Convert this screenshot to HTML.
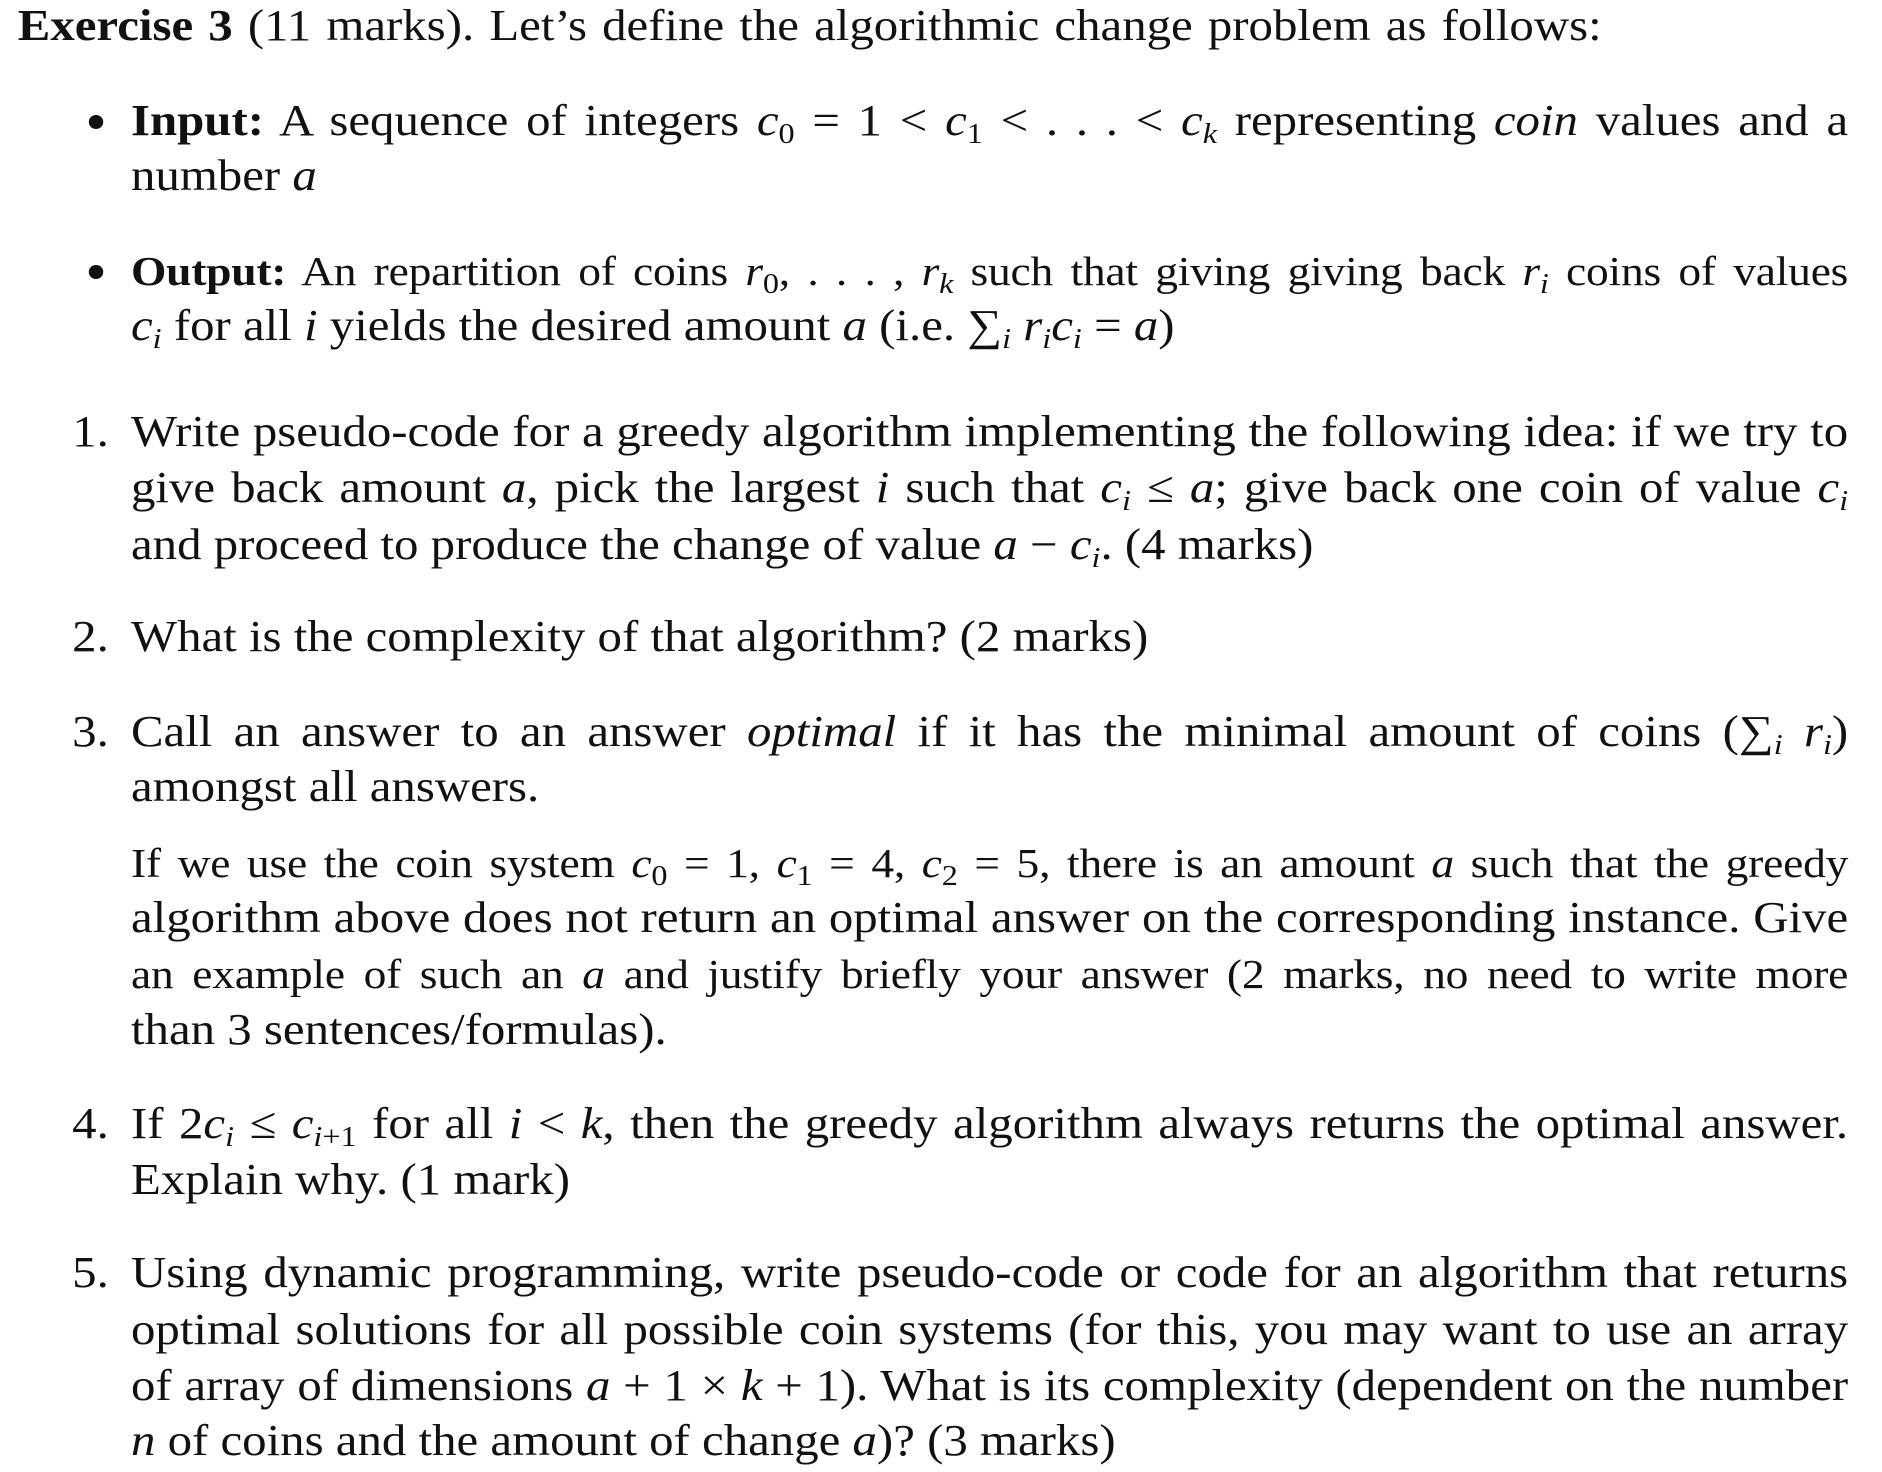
<!DOCTYPE html>
<html><head><meta charset="utf-8"><style>
body{margin:0;width:1882px;height:1472px;background:#fff;position:relative;overflow:hidden;font-family:"Liberation Serif",serif;font-size:44px;color:#111}
#w{position:absolute;left:0;top:0;width:1700px;height:1472px;transform:scaleX(1.11);transform-origin:0 0}
.l{position:absolute;white-space:nowrap;line-height:50px}
.j{text-align:justify;text-align-last:justify;white-space:normal}
.t{font-size:41px;letter-spacing:-0.2px}
i{font-style:italic}
sub{font-size:29px;vertical-align:-8px;line-height:0}
b{font-weight:bold}
.bul{position:absolute;width:13px;height:14px;border-radius:50%;background:#111}
.n{position:absolute;line-height:50px}
</style></head><body><div id="w">
<div class="l j" style="left:16px;top:1px;width:1427px"><b>Exercise 3</b> (11 marks). Let’s define the algorithmic change problem as follows:</div>

<div class="bul" style="left:80px;top:115px"></div>
<div class="l j" style="left:118px;top:96px;width:1547px"><b>Input:</b> A sequence of integers <i>c</i><sub>0</sub> = 1 &lt; <i>c</i><sub>1</sub> &lt; . . . &lt; <i>c<sub>k</sub></i> representing <i>coin</i> values and a</div>
<div class="l" style="left:118px;top:151px">number <i>a</i></div>

<div class="bul" style="left:80px;top:265px"></div>
<div class="l j t" style="left:118px;top:246px;width:1547px"><b>Output:</b> An repartition of coins <i>r</i><sub>0</sub>, . . . , <i>r<sub>k</sub></i> such that giving giving back <i>r<sub>i</sub></i> coins of values</div>
<div class="l" style="left:118px;top:301px"><i>c<sub>i</sub></i> for all <i>i</i> yields the desired amount <i>a</i> (i.e. ∑<sub><i>i</i></sub> <i>r<sub>i</sub>c<sub>i</sub></i> = <i>a</i>)</div>

<div class="n" style="left:65px;top:407px">1.</div>
<div class="l j" style="left:118px;top:407px;width:1547px">Write pseudo-code for a greedy algorithm implementing the following idea: if we try to</div>
<div class="l j" style="left:118px;top:463px;width:1547px">give back amount <i>a</i>, pick the largest <i>i</i> such that <i>c<sub>i</sub></i> ≤ <i>a</i>; give back one coin of value <i>c<sub>i</sub></i></div>
<div class="l" style="left:118px;top:520px">and proceed to produce the change of value <i>a</i> − <i>c<sub>i</sub></i>. (4 marks)</div>

<div class="n" style="left:65px;top:612px">2.</div>
<div class="l" style="left:118px;top:612px">What is the complexity of that algorithm? (2 marks)</div>

<div class="n" style="left:65px;top:707px">3.</div>
<div class="l j" style="left:118px;top:707px;width:1547px">Call an answer to an answer <i>optimal</i> if it has the minimal amount of coins (∑<sub><i>i</i></sub> <i>r<sub>i</sub></i>)</div>
<div class="l" style="left:118px;top:762px">amongst all answers.</div>

<div class="l j t" style="left:118px;top:838px;width:1547px">If we use the coin system <i>c</i><sub>0</sub> = 1, <i>c</i><sub>1</sub> = 4, <i>c</i><sub>2</sub> = 5, there is an amount <i>a</i> such that the greedy</div>
<div class="l j" style="left:118px;top:893px;width:1547px">algorithm above does not return an optimal answer on the corresponding instance. Give</div>
<div class="l j t" style="left:118px;top:949px;width:1547px">an example of such an <i>a</i> and justify briefly your answer (2 marks, no need to write more</div>
<div class="l" style="left:118px;top:1005px">than 3 sentences/formulas).</div>

<div class="n" style="left:65px;top:1099px">4.</div>
<div class="l j" style="left:118px;top:1099px;width:1547px">If 2<i>c<sub>i</sub></i> ≤ <i>c</i><sub><i>i</i>+1</sub> for all <i>i</i> &lt; <i>k</i>, then the greedy algorithm always returns the optimal answer.</div>
<div class="l" style="left:118px;top:1155px">Explain why. (1 mark)</div>

<div class="n" style="left:65px;top:1248px">5.</div>
<div class="l j" style="left:118px;top:1248px;width:1547px">Using dynamic programming, write pseudo-code or code for an algorithm that returns</div>
<div class="l j" style="left:118px;top:1305px;width:1547px">optimal solutions for all possible coin systems (for this, you may want to use an array</div>
<div class="l j" style="left:118px;top:1361px;width:1547px">of array of dimensions <i>a</i> + 1 × <i>k</i> + 1). What is its complexity (dependent on the number</div>
<div class="l" style="left:118px;top:1416px"><i>n</i> of coins and the amount of change <i>a</i>)? (3 marks)</div>
</div></body></html>
